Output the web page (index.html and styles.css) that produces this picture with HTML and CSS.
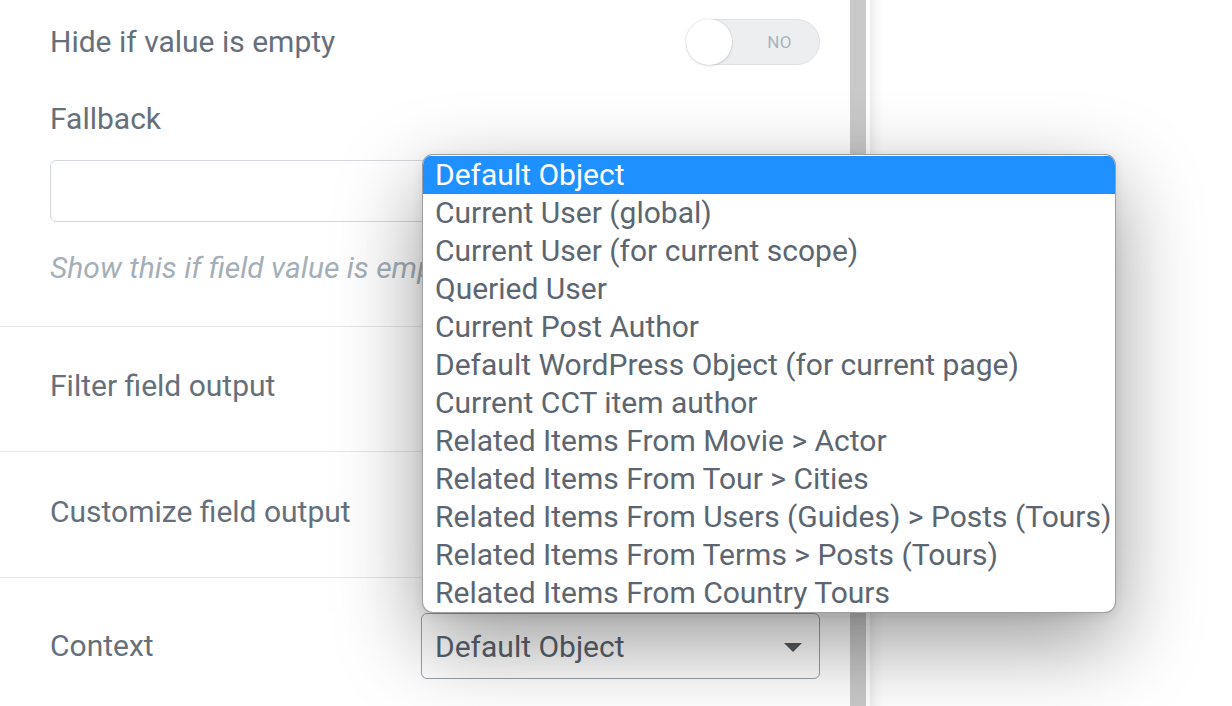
FILE: index.html
```html
<!DOCTYPE html>
<html>
<head>
<meta charset="utf-8">
<link rel="stylesheet" href="styles.css">
</head>
<body>
<div class="page">
  <div class="panel">
    <div class="top">
      <div class="switch-row">
        <span class="label">Hide if value is empty</span>
        <div class="switch"><span class="knob"></span><span class="switch-text">NO</span></div>
      </div>
      <div class="label fallback-label">Fallback</div>
      <div class="text-input"></div>
      <div class="description">Show this if field value is empty</div>
    </div>
    <div class="section">
      <span class="label">Filter field output</span>
    </div>
    <div class="section section-b">
      <span class="label">Customize field output</span>
    </div>
    <div class="section-context">
      <span class="label">Context</span>
      <div class="select">
        <span>Default Object</span>
        <span class="arrow"></span>
      </div>
    </div>
    <ul class="popup">
      <li class="selected">Default Object</li>
      <li>Current User (global)</li>
      <li>Current User (for current scope)</li>
      <li>Queried User</li>
      <li>Current Post Author</li>
      <li>Default WordPress Object (for current page)</li>
      <li>Current CCT item author</li>
      <li>Related Items From Movie &gt; Actor</li>
      <li>Related Items From Tour &gt; Cities</li>
      <li>Related Items From Users (Guides) &gt; Posts (Tours)</li>
      <li>Related Items From Terms &gt; Posts (Tours)</li>
      <li>Related Items From Country Tours</li>
    </ul>
  </div>
  <div class="scrollbar"></div>
  <div class="preview"></div>
</div>
</body>
</html>
```

FILE: styles.css
```css
html, body {
  margin: 0;
  padding: 0;
  background: #ffffff;
  font-family: Roboto, "Liberation Sans", sans-serif;
}

.page {
  display: flex;
  width: 1232px;
  height: 706px;
  overflow: hidden;
}

.panel {
  position: relative;
  width: 850px;
  flex: none;
  background: #ffffff;
}

.label {
  font-size: 30px;
  line-height: 30px;
  color: #66707a;
}

.top {
  padding: 0 30px 43px 50px;
}

.switch-row {
  height: 84px;
  display: flex;
  align-items: center;
  justify-content: space-between;
}

.switch {
  position: relative;
  width: 134px;
  height: 46px;
  border-radius: 24px;
  background: #eceef0;
  border: 1px solid #dfe2e5;
  display: flex;
  align-items: center;
  justify-content: flex-end;
  padding-right: 27px;
  box-sizing: border-box;
}

.knob {
  position: absolute;
  left: -1px;
  top: -1px;
  width: 46px;
  height: 46px;
  border-radius: 50%;
  background: #ffffff;
  box-shadow: 0 1px 3px rgba(0, 0, 0, 0.12), 0 0 0 1px rgba(0, 0, 0, 0.04);
}

.switch-text {
  font-size: 17px;
  color: #a9b3bb;
  letter-spacing: 0.5px;
}

.fallback-label {
  margin-top: 20px;
}

.text-input {
  margin-top: 26px;
  height: 62px;
  box-sizing: border-box;
  border: 1px solid #d5d8dc;
  border-radius: 6px;
  background: #ffffff;
}

.description {
  margin-top: 31px;
  font-size: 30px;
  line-height: 30px;
  font-style: italic;
  color: #a4afb7;
  white-space: nowrap;
}

.section {
  border-top: 1px solid #e6e9ec;
  height: 124px;
  display: flex;
  align-items: center;
  padding-left: 50px;
}

.section .label {
  margin-bottom: 6px;
}

.section-b {
  height: 125px;
}

.section-context {
  border-top: 1px solid #e6e9ec;
  display: flex;
  align-items: center;
  justify-content: space-between;
  padding: 35px 30px 0 50px;
}

.select {
  width: 399px;
  height: 66px;
  box-sizing: border-box;
  border: 1px solid #98a0a8;
  border-radius: 6px;
  background: #ffffff;
  display: flex;
  align-items: center;
  justify-content: space-between;
  padding: 0 17px 0 13px;
  font-size: 30px;
  color: #59636d;
}

.arrow {
  width: 0;
  height: 0;
  border-left: 9px solid transparent;
  border-right: 9px solid transparent;
  border-top: 9px solid #555b61;
  margin-top: 2px;
}

.popup {
  position: absolute;
  z-index: 5;
  left: 422px;
  top: 154px;
  width: 694px;
  margin: 0;
  padding: 1px 0 0;
  list-style: none;
  box-sizing: border-box;
  background: #ffffff;
  border: 1px solid rgba(0, 0, 0, 0.38);
  border-radius: 11px;
  overflow: hidden;
  box-shadow: 0 30px 85px rgba(0, 0, 0, 0.4), 0 3px 12px rgba(0, 0, 0, 0.08);
}

.popup li {
  height: 38px;
  line-height: 38px;
  padding-left: 12px;
  font-size: 30px;
  color: #5c6670;
  white-space: nowrap;
}

.popup li.selected {
  background: #1e90ff;
  color: #ffffff;
}

.scrollbar {
  width: 16px;
  flex: none;
  background: #c9c9c9;
}

.preview {
  flex: 1;
  margin-left: 4px;
  background: linear-gradient(to right, #ededed 0, #f8f8f8 6px, #ffffff 14px);
}
```
